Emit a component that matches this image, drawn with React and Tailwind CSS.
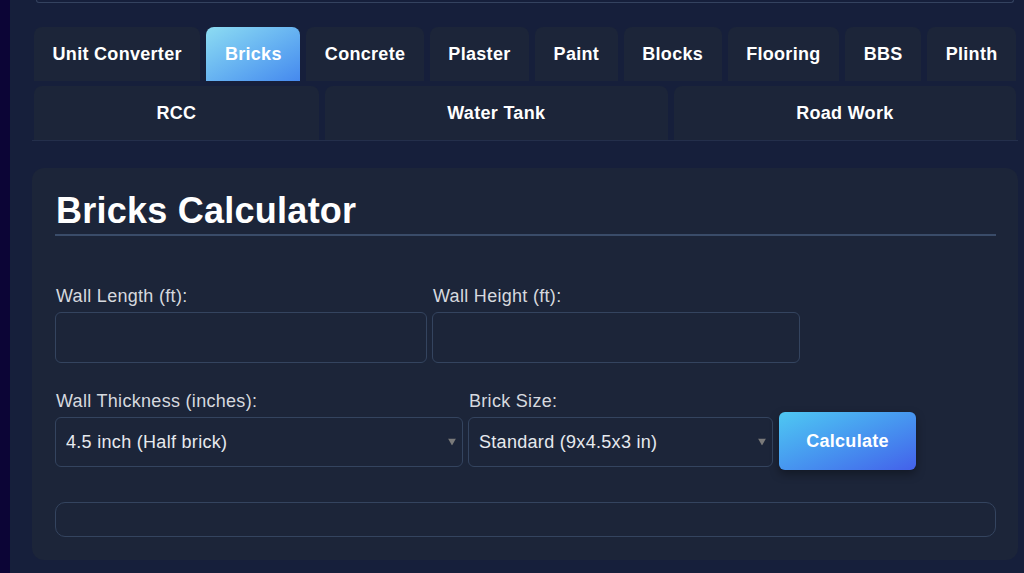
import React, { useState } from 'react';

const tabsTop = ['Unit Converter', 'Bricks', 'Concrete', 'Plaster', 'Paint', 'Blocks', 'Flooring', 'BBS', 'Plinth', 'RCC', 'Water Tank', 'Road Work'];

const Field = ({ label, width, children }) => (
  <div className={`flex flex-col ${width}`}>
    <label className="text-[18px] leading-[22px] tracking-[0.3px] text-[#d6d9df] mb-[5px] pl-[1px]">{label}</label>
    {children}
  </div>
);

const SelectBox = ({ value, options }) => (
  <div className="relative">
    <select
      defaultValue={value}
      className="w-full h-[50px] appearance-none bg-[#1c2539] border border-[#34445f] rounded-md pl-[10px] pr-8 text-[18px] tracking-[0.3px] text-[#e6e9ee] outline-none"
    >
      {options.map((o) => (
        <option key={o}>{o}</option>
      ))}
    </select>
    <svg className="absolute right-[7px] top-1/2 -translate-y-1/2 pointer-events-none" width="8" height="7" viewBox="0 0 8 7">
      <polygon points="0,0 8,0 4,7" fill="#7a7a7a" />
    </svg>
  </div>
);

const App = () => {
  const [active, setActive] = useState('Bricks');

  return (
    <div className="min-h-screen bg-[#0c0536] pl-[10px] font-['Liberation_Sans',Arial,sans-serif]">
      <div className="min-h-screen bg-[#161f3b] pl-[22px] pr-[6px]">
        {/* tail of the header above */}
        <div className="mx-[4px] h-[3px] border-b border-x border-[#34425f] rounded-b-lg" />

        {/* Tabs */}
        <div className="mt-[24px] px-[2px] border-b border-[#242f4b]">
          <div className="flex flex-wrap gap-x-[6px] gap-y-[5px]">
            {tabsTop.map((t) => (
              <button
                key={t}
                onClick={() => setActive(t)}
                className={`grow h-[54px] px-[18px] rounded-t-lg text-[18px] tracking-[0.3px] font-bold text-white whitespace-nowrap ${
                  active === t ? 'bg-gradient-to-br from-[#8ddcf2] to-[#4689ee]' : 'bg-[#1c2539]'
                }`}
              >
                {t}
              </button>
            ))}
          </div>
        </div>

        {/* Calculator panel */}
        <div className="mt-[27px] bg-[#1c2539] rounded-xl pl-[23px] pr-[22px] pt-[21px] pb-[23px]">
          <h2 className="text-[36px] leading-[44px] tracking-[0.25px] font-bold text-white border-b-2 border-[#3a4c69] pb-[1px] pl-[1px]">
            Bricks Calculator
          </h2>

          <div className="mt-[49px] flex gap-[5px]">
            <Field label="Wall Length (ft):" width="w-[372px]">
              <input className="h-[51px] bg-[#1c2539] border border-[#34445f] rounded-md px-3 text-[18px] text-white outline-none" />
            </Field>
            <Field label="Wall Height (ft):" width="w-[368px]">
              <input className="h-[51px] bg-[#1c2539] border border-[#34445f] rounded-md px-3 text-[18px] text-white outline-none" />
            </Field>
          </div>

          <div className="mt-[27px] flex items-end gap-[5px]">
            <Field label="Wall Thickness (inches):" width="w-[408px]">
              <SelectBox value="4.5 inch (Half brick)" options={['4.5 inch (Half brick)', '9 inch (Full brick)']} />
            </Field>
            <Field label="Brick Size:" width="w-[305px]">
              <SelectBox value="Standard (9x4.5x3 in)" options={['Standard (9x4.5x3 in)', 'Modular (190x90x90 mm)']} />
            </Field>
            <div className="h-[50px] flex items-center ml-[1px] -translate-y-[1px]">
              <button className="h-[58px] w-[137px] rounded-md bg-gradient-to-br from-[#4fc8f2] to-[#4460ea] text-white text-[18px] tracking-[0.3px] font-semibold shadow-[0_4px_10px_rgba(0,0,0,0.35)]">
                Calculate
              </button>
            </div>
          </div>

          <div className="mt-[35px] h-[35px] border border-[#34445f] rounded-[10px]" />
        </div>
      </div>
    </div>
  );
};

export default App;
